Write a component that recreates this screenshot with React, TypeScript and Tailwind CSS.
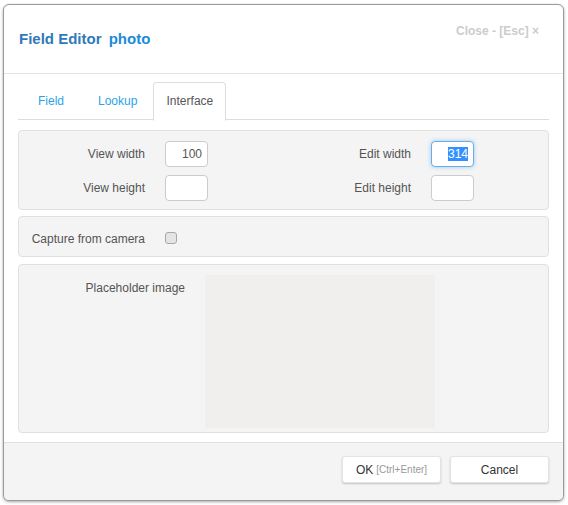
import React from "react";

const font = { fontFamily: '"Liberation Sans", Arial, sans-serif' };

function Input({ value, focused }: { value?: string; focused?: boolean }) {
  return (
    <div
      className={
        "h-[26px] w-[43px] rounded-[4px] bg-white flex items-center justify-end pr-[5px] text-[12px] text-[#555] " +
        (focused
          ? "border border-[#66afe9] shadow-[0_0_4px_rgba(102,175,233,0.6)]"
          : "border border-[#ccc]")
      }
    >
      {focused ? (
        <span className="bg-[#3390ff] text-white leading-[14px]">{value}</span>
      ) : (
        value
      )}
    </div>
  );
}

export default function App() {
  return (
    <div className="bg-white w-[568px] h-[505px] pt-[4px] pl-[3px]" style={font}>
      <div className="w-[561px] h-[497px] border border-[#9a9a9a] rounded-[6px] shadow-[0_1px_3px_rgba(0,0,0,0.35)] flex flex-col overflow-hidden bg-white">
        {/* header */}
        <div className="h-[69px] border-b border-[#e5e5e5] relative shrink-0">
          <div className="absolute left-[15px] top-[25px] text-[15px] font-bold leading-[18px]">
            <span className="text-[#2f7ab8]">Field Editor</span>{" "}
            <span className="text-[#1a8bd6] ml-[3px]">photo</span>
          </div>
          <div className="absolute right-[24px] top-[19px] text-[12px] font-bold text-[#cccccc] leading-[14px]">
            Close - [Esc] ×
          </div>
        </div>

        {/* body */}
        <div className="px-[14px] pt-[8px] flex flex-col flex-1">
          {/* tabs */}
          <div className="flex h-[38px] border-b border-[#ddd] text-[12px]">
            <div className="ml-[7px] px-[13px] flex items-center text-[#2aa3e6]">Field</div>
            <div className="ml-[8px] px-[13px] flex items-center text-[#2aa3e6]">Lookup</div>
            <div className="ml-[3px] pb-[2px] flex items-center text-[#555] bg-white border border-[#ddd] border-b-white rounded-t-[4px] h-[39px] w-[73px] justify-center">
              Interface
            </div>
          </div>

          {/* panel 1 */}
          <div className="mt-[10px] h-[80px] bg-[#f4f4f4] border border-[#e0e0e0] rounded-[4px] pt-[10px] flex flex-col gap-[8px] text-[12px] text-[#555]">
            <div className="flex items-center h-[26px]">
              <div className="w-[126px] text-right">View width</div>
              <div className="ml-[20px]">
                <Input value="100" />
              </div>
              <div className="flex-1 text-right">Edit width</div>
              <div className="ml-[20px] mr-[74px]">
                <Input value="314" focused />
              </div>
            </div>
            <div className="flex items-center h-[26px]">
              <div className="w-[126px] text-right">View height</div>
              <div className="ml-[20px]">
                <Input />
              </div>
              <div className="flex-1 text-right">Edit height</div>
              <div className="ml-[20px] mr-[74px]">
                <Input />
              </div>
            </div>
          </div>

          {/* panel 2 */}
          <div className="mt-[6px] h-[41px] bg-[#f4f4f4] border border-[#e0e0e0] rounded-[4px] flex items-center text-[12px] text-[#555]">
            <div className="w-[126px] text-right pt-[4px]">Capture from camera</div>
            <div className="ml-[20px] mt-[3px] w-[12px] h-[12px] rounded-[3px] border border-[#a8a8a8] bg-[#e4e4e4]" />
          </div>

          {/* panel 3 */}
          <div className="mt-[7px] h-[169px] bg-[#f4f4f4] border border-[#e0e0e0] rounded-[4px] flex pt-[10px] text-[12px] text-[#555]">
            <div className="w-[166px] text-right pt-[6px] leading-[14px]">Placeholder image</div>
            <div className="ml-[20px] w-[230px] h-[153px] bg-[#f0efee]" />
          </div>
        </div>

        {/* footer */}
        <div className="h-[58px] mt-[8px] border-t border-[#e0e0e0] bg-[#f4f4f4] flex justify-end items-start pt-[13px] pr-[14px] gap-[9px] shrink-0">
          <div className="w-[99px] h-[27px] bg-white border border-[#e4e4e4] rounded-[3px] shadow-[0_1px_2px_rgba(0,0,0,0.2)] flex items-center justify-center">
            <span className="text-[12px] text-[#333]">OK</span>
            <span className="text-[10px] text-[#999] ml-[3px]">[Ctrl+Enter]</span>
          </div>
          <div className="w-[99px] h-[27px] bg-white border border-[#e4e4e4] rounded-[3px] shadow-[0_1px_2px_rgba(0,0,0,0.2)] flex items-center justify-center text-[12px] text-[#333]">
            Cancel
          </div>
        </div>
      </div>
    </div>
  );
}
